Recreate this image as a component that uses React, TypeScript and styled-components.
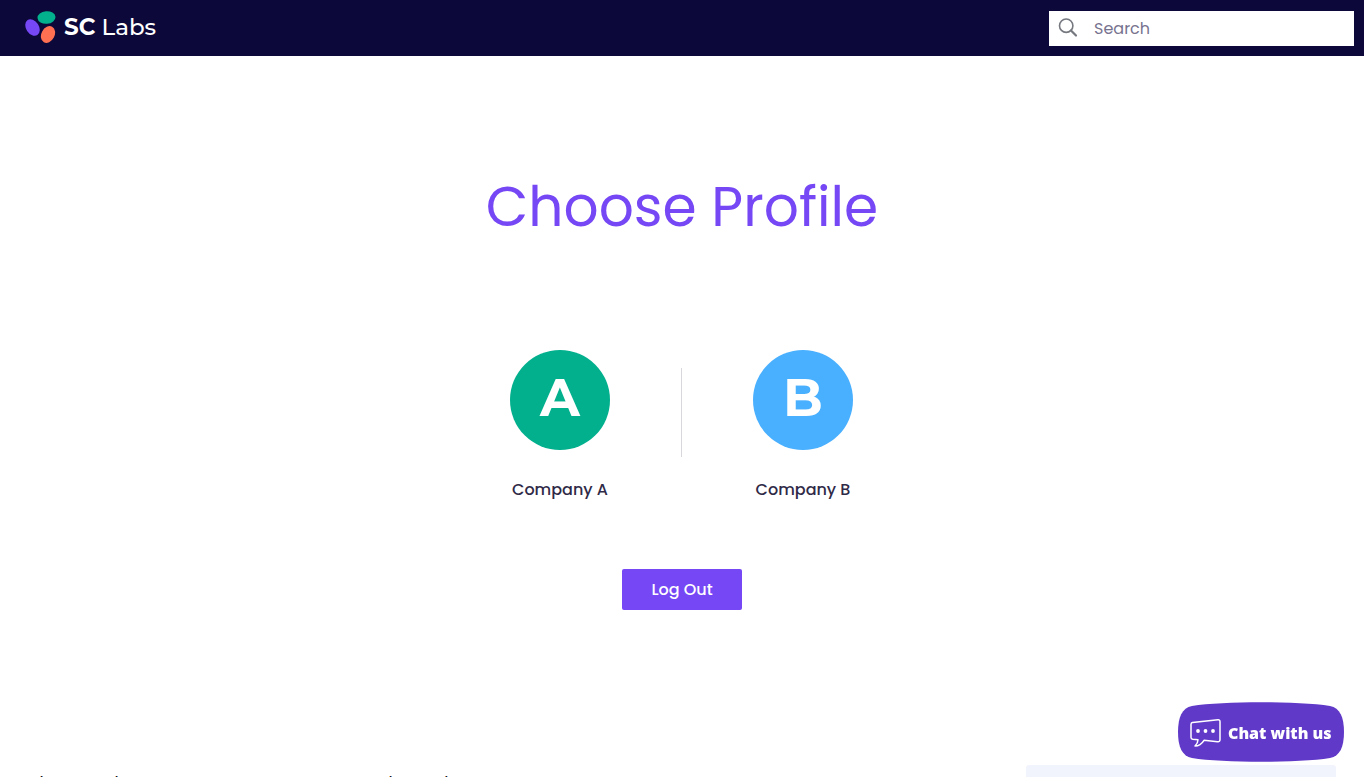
import React from "react";
import styled, { createGlobalStyle } from "styled-components";

const Global = createGlobalStyle`
  *, *::before, *::after { box-sizing: border-box; }
  html { height: 100%; overflow: hidden; }
  body {
    margin: 0;
    height: 100%;
    overflow: hidden;
    background: #fff;
    color: #2f2a47;
    font-family: Poppins, Inter, "Liberation Sans", sans-serif;
    font-size: 16px;
    line-height: 24px;
  }
`;

const Header = styled.header`
  display: flex;
  align-items: center;
  justify-content: space-between;
  height: 56px;
  padding: 0 10px 0 24px;
  background: #0c0839;
`;

const Brand = styled.a`
  display: flex;
  align-items: center;
  gap: 8px;
  color: #fff;
  text-decoration: none;
`;

const BrandName = styled.span`
  padding-bottom: 2px;
  font-family: Montserrat, Inter, sans-serif;
  font-size: 23px;
  line-height: 32px;
  font-weight: 500;
  b { font-weight: 700; }
`;

const SearchBox = styled.label`
  display: flex;
  align-items: center;
  gap: 16px;
  width: 305px;
  height: 35px;
  padding: 0 9px;
  background: #fff;
`;

const SearchInput = styled.input`
  flex: 1;
  min-width: 0;
  padding: 2px 0 0;
  border: 0;
  outline: 0;
  background: transparent;
  font: inherit;
  color: #2f2a47;
  &::placeholder { color: #77738f; opacity: 1; }
`;

const Main = styled.main`
  display: flex;
  flex-direction: column;
  align-items: center;
  padding: 114px 24px 155px;
`;

const Title = styled.h1`
  margin: 0 0 106px;
  font-size: 55px;
  line-height: 74px;
  font-weight: 400;
  color: #7547f5;
`;

const Profiles = styled.div`
  display: flex;
  margin-bottom: 67px;
`;

const Profile = styled.button`
  display: flex;
  flex-direction: column;
  align-items: center;
  gap: 28px;
  width: 243px;
  padding: 0 1px 0 0;
  border: 0;
  background: none;
  font: inherit;
  font-weight: 500;
  color: inherit;
  cursor: pointer;
`;

const Avatar = styled.span<{ $color: string }>`
  display: flex;
  align-items: center;
  justify-content: center;
  width: 100px;
  height: 100px;
  padding-bottom: 4px;
  border-radius: 50%;
  background: ${(p) => p.$color};
  color: #fff;
  font-family: Montserrat, Inter, sans-serif;
  font-size: 52px;
  font-weight: 700;
`;

const Divider = styled.span`
  width: 1px;
  height: 89px;
  margin: 18px 0 0 -1px;
  background: #d8d8dc;
`;

const LogOut = styled.button`
  width: 120px;
  height: 41px;
  border: 0;
  border-radius: 2px;
  background: #7547f5;
  color: #fff;
  font: inherit;
  font-weight: 500;
  cursor: pointer;
`;

const Footer = styled.footer`
  display: grid;
  grid-template-columns: 350px 1fr 310px;
  align-items: start;
  padding: 0 28px 0 30px;
  color: #111;
`;

const FooterTitle = styled.h2`
  margin: 5px 0 0;
  font-size: 14px;
  line-height: 24px;
  font-weight: 500;
`;

const FooterPanel = styled.div`
  height: 160px;
  border-radius: 3px;
  background: #f1f4fc;
`;

const Chat = styled.button`
  position: fixed;
  right: 20px;
  bottom: 15px;
  display: flex;
  align-items: center;
  gap: 7px;
  width: 166px;
  height: 60px;
  padding: 2px 0 0 11px;
  border: 0;
  background: none;
  color: #fff;
  font-family: "Open Sans", "Noto Sans", sans-serif;
  font-size: 16px;
  font-weight: 800;
  white-space: nowrap;
  cursor: pointer;
`;

const ChatShape = styled.svg`
  position: absolute;
  inset: 0;
  z-index: -1;
`;

const profiles = [
  { letter: "A", name: "Company A", color: "#02b08d" },
  { letter: "B", name: "Company B", color: "#49afff" },
];

export default function App() {
  return (
    <>
      <Global />
      <Header>
        <Brand href="#">
          <svg width="32" height="34" viewBox="0 0 32 34" aria-hidden="true">
            <ellipse cx="22.5" cy="6.5" rx="9" ry="6.3" fill="#02b08d" transform="rotate(-5 22.5 6.5)" />
            <ellipse cx="8.5" cy="16.5" rx="6.4" ry="9" fill="#7547f5" transform="rotate(-33 8.5 16.5)" />
            <ellipse cx="24" cy="23.5" rx="6.6" ry="8.8" fill="#ff6f52" transform="rotate(28 24 23.5)" />
          </svg>
          <BrandName><b>SC</b> Labs</BrandName>
        </Brand>
        <SearchBox>
          <svg width="20" height="20" viewBox="0 0 20 20" fill="none" stroke="#75787f" aria-hidden="true">
            <circle cx="8.2" cy="7.7" r="6.7" strokeWidth="1.6" />
            <path d="M13 12.5L18 17.5" strokeWidth="2.2" strokeLinecap="round" />
          </svg>
          <SearchInput type="text" placeholder="Search" aria-label="Search" />
        </SearchBox>
      </Header>
      <Main>
        <Title>Choose Profile</Title>
        <Profiles>
          {profiles.map((p, i) => (
            <React.Fragment key={p.letter}>
              {i > 0 && <Divider />}
              <Profile type="button">
                <Avatar $color={p.color}>{p.letter}</Avatar>
                {p.name}
              </Profile>
            </React.Fragment>
          ))}
        </Profiles>
        <LogOut type="button">Log Out</LogOut>
      </Main>
      <Footer>
        <FooterTitle>About SC Labs</FooterTitle>
        <FooterTitle>Blog &amp; Labs</FooterTitle>
        <FooterPanel />
      </Footer>
      <Chat type="button">
        <ChatShape width="166" height="60" viewBox="0 0 166 60" aria-hidden="true">
          <path d="M14 4C45-1 121-1 152 4C162 6 166 15 166 30S162 54 152 56C121 61 45 61 14 56C4 54 0 45 0 30S4 6 14 4Z" fill="#6039c8" />
        </ChatShape>
        <svg width="32" height="30" viewBox="0 0 32 30" fill="none" stroke="#fff" strokeWidth="1.5" strokeLinejoin="round" aria-hidden="true">
          <path d="M3.5 4.5L29 1.8Q31 1.7 31 3.7V21.5Q31 24 28.5 23.7L15 22.3Q11.5 28 6 28Q9 25 9 21.8L3.8 21.3Q2 21 2 19.5V6.5Q2 4.7 3.5 4.5Z" />
          <g fill="#fff" stroke="none">
            <circle cx="9" cy="13" r="1.9" />
            <circle cx="16.5" cy="13" r="1.9" />
            <circle cx="24" cy="13" r="1.9" />
          </g>
        </svg>
        Chat with us
      </Chat>
    </>
  );
}
